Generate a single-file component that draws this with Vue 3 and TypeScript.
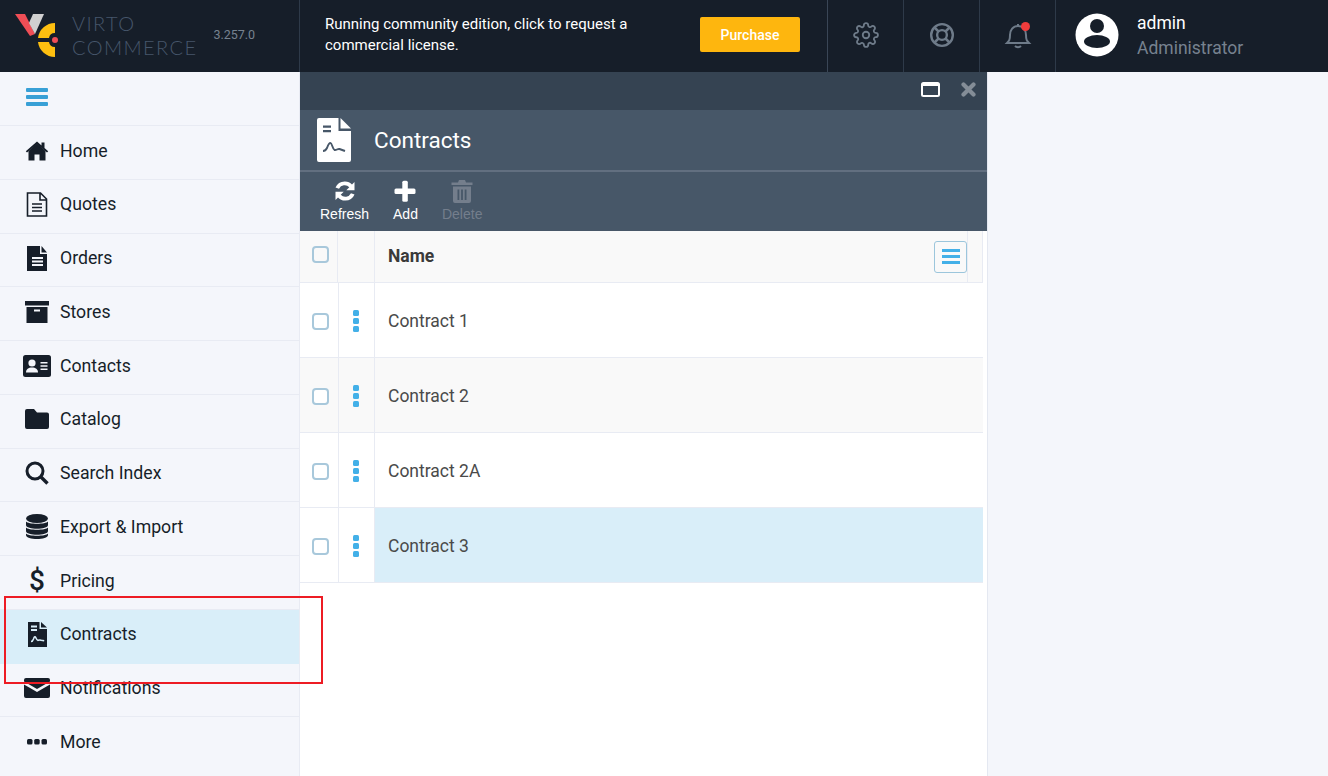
<script setup lang="ts">
const menu = [
  { label: 'Home', icon: 'home' },
  { label: 'Quotes', icon: 'quotes' },
  { label: 'Orders', icon: 'orders' },
  { label: 'Stores', icon: 'stores' },
  { label: 'Contacts', icon: 'contacts' },
  { label: 'Catalog', icon: 'catalog' },
  { label: 'Search Index', icon: 'search' },
  { label: 'Export & Import', icon: 'export' },
  { label: 'Pricing', icon: 'pricing' },
  { label: 'Contracts', icon: 'contracts' },
  { label: 'Notifications', icon: 'mail' },
  { label: 'More', icon: 'more' },
]

const rows = ['Contract 1', 'Contract 2', 'Contract 2A', 'Contract 3']
</script>

<template>
  <div class="app">
    <header class="topbar">
      <div class="brand">
        <svg class="logo" width="44" height="44" viewBox="15 13 44 44">
          <path d="M15 13h10l10 20-5 2z" fill="#ef4e56" />
          <path d="M29 22l4-9h11L35 33z" fill="#d0d0d0" />
          <path d="M55 22a17 17 0 0 0-17 15h11a6 6 0 0 1 6-5z" fill="#fdbf10" />
          <path d="M55 56a17 17 0 0 1-17-15h11a6 6 0 0 0 6 5z" fill="#fdbf10" />
          <circle cx="55" cy="39" r="3" fill="#ef4e56" />
        </svg>
        <div class="wordmark"><span>VIRTO</span><span>COMMERCE</span></div>
        <span class="version">3.257.0</span>
      </div>
      <div class="notice">
        <p>Running community edition, click to request a commercial license.</p>
        <button class="purchase">Purchase</button>
      </div>
      <div class="top-icon">
        <svg width="26" height="26" viewBox="0 0 24 24" fill="none" stroke="#6e7b89" stroke-width="1.700" stroke-linecap="round" stroke-linejoin="round">
          <circle cx="12" cy="12" r="3" />
          <path d="M19.400 15a1.650 1.650 0 0 0 .33 1.820l.06.06a2 2 0 0 1 0 2.830 2 2 0 0 1-2.830 0l-.06-.06a1.650 1.650 0 0 0-1.820-.33 1.650 1.650 0 0 0-1 1.510V21a2 2 0 0 1-2 2 2 2 0 0 1-2-2v-.09A1.650 1.650 0 0 0 9 19.400a1.650 1.650 0 0 0-1.820.33l-.06.06a2 2 0 0 1-2.830 0 2 2 0 0 1 0-2.830l.06-.06a1.650 1.650 0 0 0 .33-1.820 1.650 1.650 0 0 0-1.510-1H3a2 2 0 0 1-2-2 2 2 0 0 1 2-2h.09A1.650 1.650 0 0 0 4.600 9a1.650 1.650 0 0 0-.33-1.820l-.06-.06a2 2 0 0 1 0-2.830 2 2 0 0 1 2.830 0l.06.06a1.650 1.650 0 0 0 1.820.33H9a1.650 1.650 0 0 0 1-1.510V3a2 2 0 0 1 2-2 2 2 0 0 1 2 2v.09a1.650 1.650 0 0 0 1 1.510 1.650 1.650 0 0 0 1.820-.33l.06-.06a2 2 0 0 1 2.830 0 2 2 0 0 1 0 2.830l-.06.06a1.650 1.650 0 0 0-.33 1.820V9a1.650 1.650 0 0 0 1.510 1H21a2 2 0 0 1 2 2 2 2 0 0 1-2 2h-.09a1.650 1.650 0 0 0-1.510 1z" />
        </svg>
      </div>
      <div class="top-icon">
        <svg width="26" height="26" viewBox="0 0 24 24" fill="none" stroke="#6e7b89" stroke-width="2.200">
          <circle cx="12" cy="12" r="10" />
          <circle cx="12" cy="12" r="4.500" />
          <path d="M5 5l4 4M19 5l-4 4M5 19l4-4M19 19l-4-4" stroke-width="2.400" />
        </svg>
      </div>
      <div class="top-icon bell">
        <svg width="28" height="28" viewBox="0 0 28 28" fill="none" stroke="#6e7b89" stroke-width="2">
          <path d="M3 22h22c-2-2-3-3-3-8 0-5-3-9-8-9s-8 4-8 9c0 5-1 6-3 8zM11 25c1.500 1.500 4.500 1.500 6 0M14 5V3" />
        </svg>
        <i class="dot"></i>
      </div>
      <div class="account">
        <svg class="avatar" width="44" height="44" viewBox="0 0 44 44">
          <circle cx="22" cy="22" r="21.500" fill="#fff" />
          <circle cx="22" cy="13" r="7" fill="#161e29" />
          <ellipse cx="22" cy="28.500" rx="13" ry="6.500" fill="#161e29" />
        </svg>
        <div class="who">
          <span class="user">admin</span>
          <span class="role">Administrator</span>
        </div>
      </div>
    </header>

    <div class="body">
      <nav class="sidebar">
        <div class="burger-row">
          <span class="burger"><i></i><i></i><i></i></span>
        </div>
        <a v-for="item in menu" :key="item.label" class="nav-item" :class="{ active: item.label === 'Contracts' }">
          <span class="nav-icon">
            <svg v-if="item.icon === 'home'" width="24" height="20" viewBox="0 0 24 20" fill="#161e29">
              <path d="M12 2.500 3.500 10v9.500h6v-6h5v6h6V10z" />
              <path d="M.8 10.200 12 .6l4.500 3.900V1.600h3v5.500l3.700 3.100-1.200 1.400L12 3.300 2 11.600z" />
            </svg>
            <svg v-else-if="item.icon === 'quotes'" width="22" height="25" viewBox="0 0 22 25" fill="none" stroke="#161e29" stroke-width="1.600">
              <path d="M1.500 1h13l6 6v17h-19zM14 1v7h6.500" />
              <path d="M6 12h10M6 15.500h10M6 19h10" />
            </svg>
            <svg v-else-if="item.icon === 'orders'" width="22" height="25" viewBox="0 0 22 25" fill="#161e29">
              <path d="M1 0h13v8h7v17H1z" />
              <path d="M15.500 0 21 6.500h-5.500z" />
              <path d="M6 11h11v2H6zM6 14.500h11v2H6zM6 18h11v2H6z" fill="#f4f6fb" />
            </svg>
            <svg v-else-if="item.icon === 'stores'" width="24" height="22" viewBox="0 0 24 22" fill="#161e29">
              <path d="M0 0h24v4.500H0zM1.500 6h21v16h-21z" />
              <rect x="9" y="8.500" width="6" height="2" fill="#f4f6fb" />
            </svg>
            <svg v-else-if="item.icon === 'contacts'" width="28" height="22" viewBox="0 0 28 22">
              <rect width="28" height="22" rx="2.500" fill="#161e29" />
              <circle cx="9" cy="8" r="3.600" fill="#f4f6fb" />
              <path d="M3 17.500c0-3.500 2.500-5 6-5s6 1.500 6 5z" fill="#f4f6fb" />
              <path d="M17.500 7h7v1.500h-7zM17.500 10.200h7v1.500h-7zM17.500 13.400h7v1.500h-7z" fill="#f4f6fb" />
            </svg>
            <svg v-else-if="item.icon === 'catalog'" width="24" height="20" viewBox="0 0 24 20" fill="#161e29">
              <path d="M2 0h7l3 3.500h10a2 2 0 0 1 2 2V18a2 2 0 0 1-2 2H2a2 2 0 0 1-2-2V2a2 2 0 0 1 2-2z" />
            </svg>
            <svg v-else-if="item.icon === 'search'" width="24" height="24" viewBox="0 0 24 24" fill="none" stroke="#161e29">
              <circle cx="10" cy="10" r="8" stroke-width="3" />
              <path d="M15.500 15.500 22.500 22.500" stroke-width="3.400" />
            </svg>
            <svg v-else-if="item.icon === 'export'" width="22" height="25" viewBox="0 0 22 25" fill="#161e29">
              <ellipse cx="11" cy="4.500" rx="11" ry="4.500" />
              <path d="M0 7.500c2 3 20 3 22 0V11c0 5-22 5-22 0zM0 13.500c2 3 20 3 22 0V17c0 5-22 5-22 0z" />
              <path d="M0 19.500c2 3 20 3 22 0V21c0 5.300-22 5.300-22 0z" />
            </svg>
            <span v-else-if="item.icon === 'pricing'" class="dollar">$</span>
            <svg v-else-if="item.icon === 'contracts'" width="19" height="25" viewBox="0 0 19 25" fill="#161e29">
              <path d="M0 0h11.500v7H19v18H0z" />
              <path d="M13 0l6 5.500h-6z" />
              <path d="M3 3.500h6v2H3zM3 7h6v2H3z" fill="#d9eef9" />
              <path d="M3 19.500c1.500 0 2-1 2.500-2.500.6-2 1.400-3 2.200-1.500.7 1.600 1.300 3.200 2.500 2.800 1.200-.5 2-.5 3 0l3 .5" fill="none" stroke="#d9eef9" stroke-width="1.600" />
            </svg>
            <svg v-else-if="item.icon === 'mail'" width="26" height="20" viewBox="0 0 26 20" fill="#161e29">
              <path d="M2 0h22a2 2 0 0 1 2 2v1.500L13 11 0 3.500V2a2 2 0 0 1 2-2z" />
              <path d="M0 6.500 13 14l13-7.500V18a2 2 0 0 1-2 2H2a2 2 0 0 1-2-2z" />
            </svg>
            <svg v-else width="20" height="6" viewBox="0 0 20 6" fill="#161e29">
              <rect width="5.500" height="5.500" rx="1.500" />
              <rect x="7.200" width="5.500" height="5.500" rx="1.500" />
              <rect x="14.500" width="5.500" height="5.500" rx="1.500" />
            </svg>
          </span>
          <span>{{ item.label }}</span>
        </a>
      </nav>

      <section class="blade">
        <div class="blade-head">
          <svg width="19" height="15" viewBox="0 0 19 15">
            <rect x="1" y="1" width="17" height="13" rx="1.500" fill="#354352" stroke="#fff" stroke-width="2" />
            <rect x="1" y="1" width="17" height="3" fill="#fff" />
          </svg>
          <svg width="15" height="15" viewBox="0 0 15 15">
            <path d="M2.500 2.500l10 10M12.500 2.500l-10 10" stroke="#848d97" stroke-width="4.200" stroke-linecap="round" />
          </svg>
        </div>
        <div class="blade-title">
          <svg width="34" height="44" viewBox="0 0 34 44">
            <path d="M2 0h19.500v13H34v29a2 2 0 0 1-2 2H2a2 2 0 0 1-2-2V2a2 2 0 0 1 2-2z" fill="#fff" />
            <path d="M23.500 0 34 10.500H23.500z" fill="#fff" />
            <path d="M6 7.500h8v2.200H6zM6 12h8v2.200H6z" fill="#475768" />
            <path d="M6 33c2 0 3-1 4-3 1-3 2-5 3.500-5s2 6 4 7c2 .5 3-1.500 5-1l5.500 2" fill="none" stroke="#475768" stroke-width="1.900" />
          </svg>
          <h1>Contracts</h1>
        </div>
        <div class="toolbar">
          <div class="tool">
            <svg width="24" height="24" viewBox="0 0 24 24" fill="#fff">
              <path d="M12 2.500c2.800 0 5.300 1.200 7 3.100L21.500 3v8.200h-8.200l3-3A6.400 6.400 0 0 0 6 9.800L2.500 8.600A10 10 0 0 1 12 2.500zM12 21.500c-2.800 0-5.300-1.200-7-3.100L2.500 21v-8.200h8.200l-3 3A6.400 6.400 0 0 0 18 14.200l3.500 1.200a10 10 0 0 1-9.500 6.100z" />
            </svg>
            <span>Refresh</span>
          </div>
          <div class="tool">
            <svg width="24" height="24" viewBox="0 0 24 24" fill="#fff">
              <rect x="1.500" y="9.500" width="21" height="5.500" rx="1.500" />
              <rect x="9.300" y="1.700" width="5.500" height="21" rx="1.500" />
            </svg>
            <span>Add</span>
          </div>
          <div class="tool disabled">
            <svg width="24" height="24" viewBox="0 0 24 24" fill="#747e8c">
              <path d="M1.500 3.500H8L9 1h6l1 2.500h6.500V6h-21zM3 7.500h18V22a2 2 0 0 1-2 2H5a2 2 0 0 1-2-2z" />
              <path d="M7.500 10.500h1.800V21H7.500zM11.100 10.500h1.800V21h-1.800zM14.700 10.500h1.800V21h-1.800z" fill="#475768" />
            </svg>
            <span>Delete</span>
          </div>
        </div>

        <div class="grid">
          <div class="row header">
            <div class="cell check"><i class="box"></i></div>
            <div class="cell menu"></div>
            <div class="cell name">
              Name
              <span class="opt-btn"><i></i><i></i><i></i></span>
            </div>
            <div class="cell filler"></div>
          </div>
          <div
            v-for="(row, i) in rows"
            :key="row"
            class="row item"
            :class="{ odd: i === 1, selected: i === 3 }"
          >
            <div class="cell check"><i class="box"></i></div>
            <div class="cell menu"><span class="dots"><i></i><i></i><i></i></span></div>
            <div class="cell name">{{ row }}</div>
          </div>
        </div>
      </section>
    </div>

    <div class="callout"></div>
  </div>
</template>

<style>
html,
body {
  margin: 0;
  background: #f4f6fb;
}
</style>

<style scoped>
.app {
  position: relative;
  width: 1328px;
  height: 776px;
  overflow: hidden;
  font-family: Roboto, "Liberation Sans", sans-serif;
  color: #161e29;
}

.topbar {
  display: flex;
  height: 72px;
  background: #161e29;
  color: #fff;
}

.brand {
  display: flex;
  align-items: center;
  width: 299px;
  flex-shrink: 0;
  box-sizing: border-box;
  padding-left: 15px;
}

.wordmark {
  display: flex;
  flex-direction: column;
  margin: -3px 0 0 13px;
  font-family: Lato, sans-serif;
  font-weight: 300;
  font-size: 20px;
  letter-spacing: 1.400px;
  line-height: 24px;
  color: #46566b;
}

.version {
  margin-left: 16px;
  margin-top: -4px;
  font-size: 12.500px;
  color: #76828f;
}

.notice {
  display: flex;
  align-items: center;
  justify-content: space-between;
  width: 529px;
  flex-shrink: 0;
  box-sizing: border-box;
  padding: 0 27px 3px 25px;
  border-left: 1px solid #2e3a49;
  border-right: 1px solid #3a4656;
}

.notice p {
  width: 320px;
  margin: 0;
  font-size: 15px;
  line-height: 21px;
}

.purchase {
  width: 100px;
  height: 35px;
  border: 0;
  border-radius: 2px;
  background: #feb60e;
  color: #fff;
  font: 500 14px Roboto, sans-serif;
}

.top-icon {
  position: relative;
  display: flex;
  align-items: center;
  justify-content: center;
  width: 76px;
  flex-shrink: 0;
  box-sizing: border-box;
  padding-bottom: 2px;
  border-right: 1px solid #2e3a49;
}

.bell .dot {
  position: absolute;
  top: 22px;
  left: 41px;
  width: 9px;
  height: 9px;
  border-radius: 50%;
  background: #f03c3c;
}

.account {
  display: flex;
  align-items: center;
  padding-left: 19px;
  gap: 18px;
}

.avatar {
  margin-bottom: 2px;
}

.who {
  display: flex;
  flex-direction: column;
  gap: 1px;
}

.user {
  font-size: 17.500px;
  line-height: 23px;
}

.role {
  font-size: 17.500px;
  line-height: 24px;
  color: #76828f;
}

.body {
  display: flex;
  height: 704px;
}

.sidebar {
  width: 300px;
  flex-shrink: 0;
  box-sizing: border-box;
  border-right: 1px solid #e8ebf3;
  background: #f4f6fb;
}

.burger-row {
  display: flex;
  align-items: center;
  height: 54px;
  box-sizing: border-box;
  padding: 0 0 4px 26px;
  border-bottom: 1px solid #e8ebf3;
}

.burger,
.opt-btn {
  display: flex;
  flex-direction: column;
}

.burger {
  gap: 3px;
  width: 22px;
}

.burger i {
  height: 4px;
  border-radius: 1px;
  background: #38a0d6;
}

.nav-item {
  display: flex;
  align-items: center;
  height: 53.750px;
  box-sizing: border-box;
  padding-bottom: 3.500px;
  border-bottom: 1px solid #e8ebf3;
  font-size: 17.700px;
  color: #161e29;
}

.nav-item:nth-last-child(1) {
  border-bottom: 0;
}

.nav-item.active {
  background: #d9eef9;
  border-bottom-color: #d9eef9;
}

.nav-icon {
  display: flex;
  align-items: center;
  justify-content: center;
  width: 28px;
  margin: 0 9px 0 23px;
}

.dollar {
  font-size: 28px;
  font-weight: 500;
  line-height: 1;
}

.blade {
  display: flex;
  flex-direction: column;
  width: 688px;
  box-sizing: border-box;
  border-right: 1px solid #e4e8f1;
  background: #fff;
}

.blade-head {
  display: flex;
  align-items: center;
  justify-content: flex-end;
  gap: 21px;
  height: 38px;
  padding: 0 11px 3px 0;
  box-sizing: border-box;
  background: #354352;
}

.blade-title {
  display: flex;
  align-items: center;
  gap: 23px;
  height: 62px;
  padding-left: 17px;
  box-sizing: border-box;
  background: #475768;
  border-bottom: 2px solid #626f80;
}

.blade-title h1 {
  margin: 0;
  font-size: 22.500px;
  font-weight: 400;
  color: #fff;
}

.toolbar {
  display: flex;
  height: 59px;
  padding: 0 0 2px 20px;
  box-sizing: border-box;
  gap: 24px;
  background: #475768;
}

.tool {
  display: flex;
  flex-direction: column;
  align-items: center;
  justify-content: center;
  gap: 3px;
  color: #fff;
  font-family: "Liberation Sans", Arial, sans-serif;
  font-size: 14px;
}

.tool.disabled {
  color: #747e8c;
}

.grid {
  width: 683px;
}

.row {
  display: flex;
  box-sizing: border-box;
  border-bottom: 1px solid #e8ebf3;
}

.row.header {
  height: 52px;
  background: #f9f9f9;
  font-weight: 700;
  color: #3a3a3a;
}

.row.item {
  height: 75px;
  background: #fff;
  color: #4a4a4a;
}

.row.odd {
  background: #f9f9f9;
}

.row.selected .name {
  background: #d9eef9;
}

.cell {
  display: flex;
  align-items: center;
  box-sizing: border-box;
  border-right: 1px solid #e8ebf3;
}

.item .cell {
  padding-top: 1px;
}

.header .cell {
  padding-bottom: 1px;
}

.check {
  width: 39px;
  padding-left: 12px;
}

.menu {
  width: 36px;
  justify-content: center;
}

.name {
  flex: 1;
  padding-left: 13px;
  font-size: 17.500px;
  border-right: 0;
}

.header .check {
  width: 38px;
}

.header .menu {
  width: 37px;
}

.filler {
  width: 16px;
  border-left: 1px solid #e8ebf3;
}

.box {
  width: 17px;
  height: 17px;
  box-sizing: border-box;
  border: 2px solid #a8c8db;
  border-radius: 4px;
  background: #fff;
}

.item .box {
  margin-top: 1px;
}

.header .box {
  background: transparent;
  margin-top: -4px;
}

.dots {
  display: flex;
  flex-direction: column;
  gap: 2px;
  margin-left: -2px;
}

.dots i {
  width: 6px;
  height: 6px;
  border-radius: 1.500px;
  background: #43b0e8;
}

.opt-btn {
  align-items: center;
  justify-content: center;
  gap: 3px;
  width: 33px;
  height: 32px;
  margin: 1px 0 0 auto;
  box-sizing: border-box;
  border: 1px solid #9cc6dc;
  border-radius: 3px;
}

.opt-btn i {
  width: 18px;
  height: 3px;
  background: #43b0e8;
}

.callout {
  position: absolute;
  left: 4px;
  top: 596px;
  width: 319px;
  height: 88px;
  box-sizing: border-box;
  border: 2px solid #ed1c24;
  pointer-events: none;
}
</style>
